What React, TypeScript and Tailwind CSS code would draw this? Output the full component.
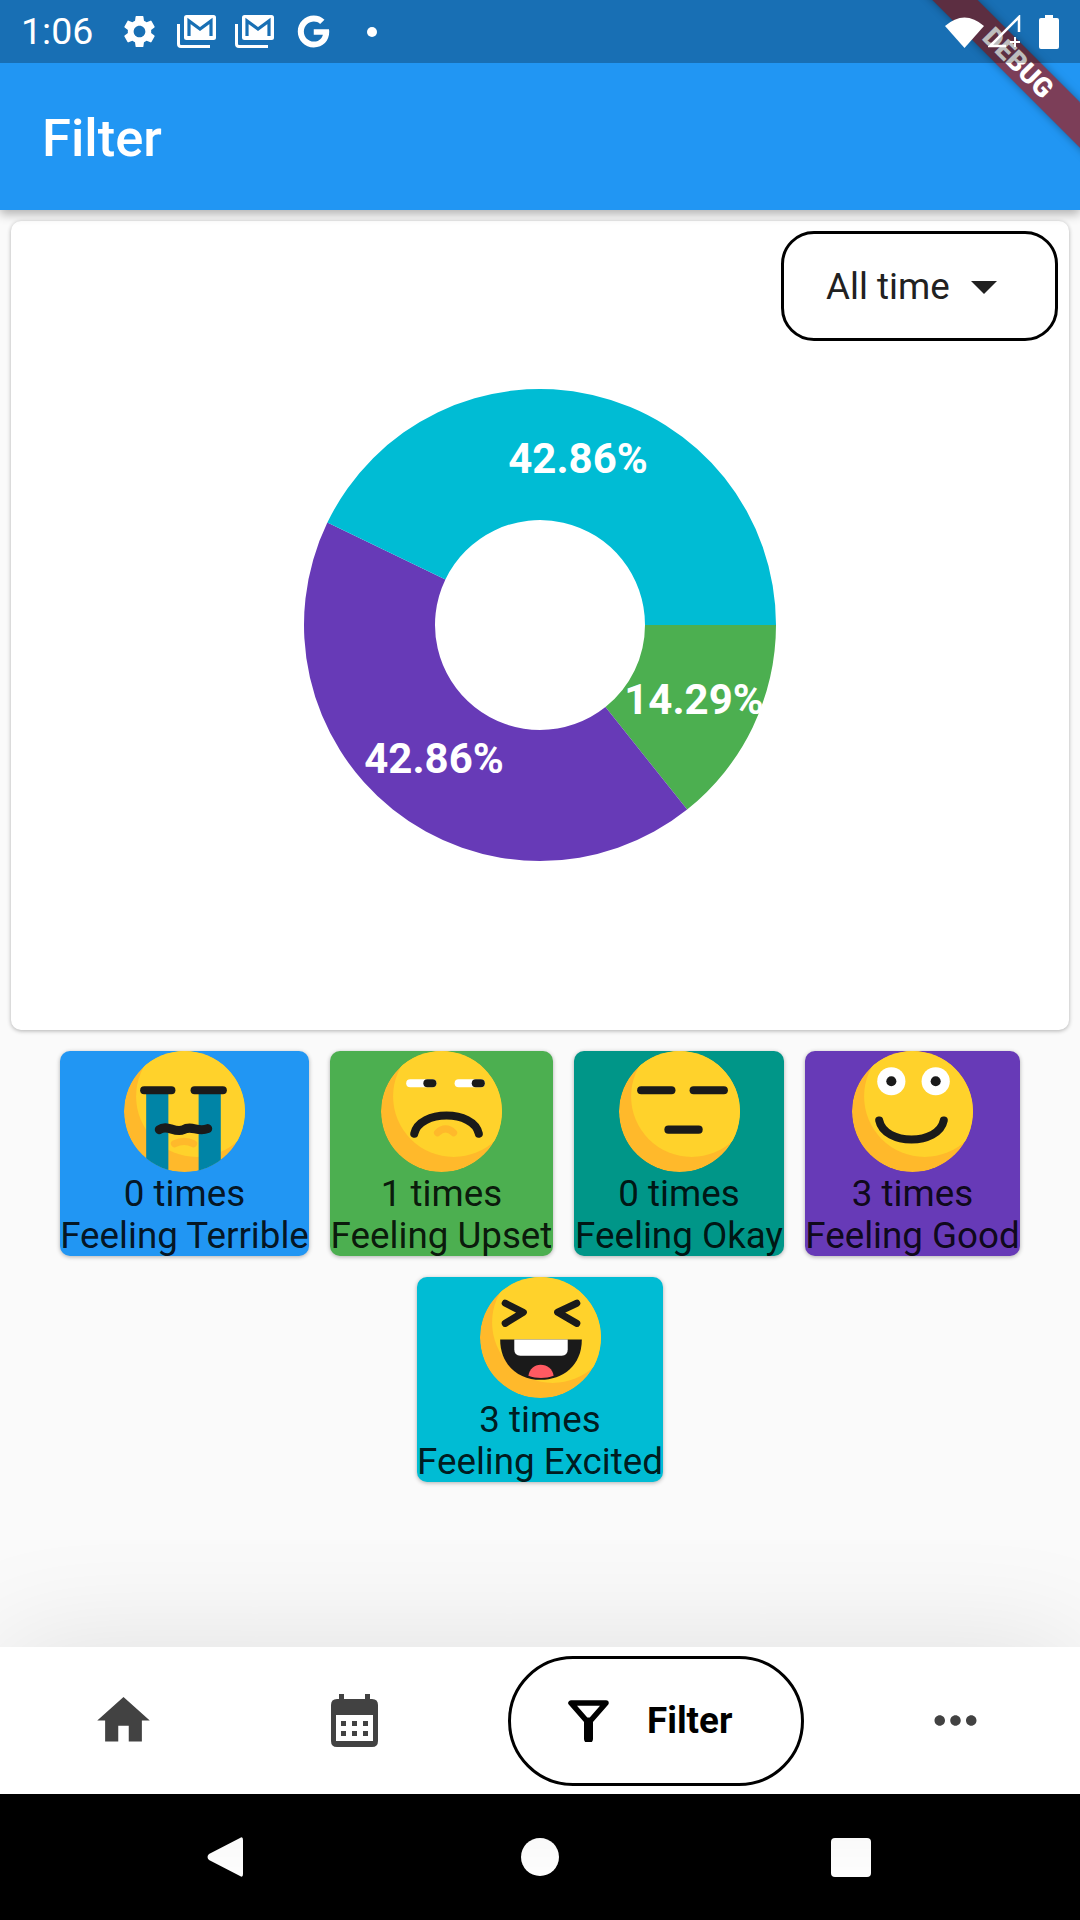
import React from 'react';
import { MdSettings, MdHome, MdMoreHoriz } from 'react-icons/md';
import { FaGoogle } from 'react-icons/fa';

const INK = '#1a1a1a';
const SKIN_DARK = '#ffb92b';
const SKIN = '#ffd22b';

// wedge of the donut, angles in degrees clockwise from east
const wedge = (from: number, to: number) => {
  const c = 236;
  const R = 236;
  const r = 105;
  const pt = (rad: number, deg: number) => {
    const a = (deg * Math.PI) / 180;
    return `${c + rad * Math.cos(a)} ${c + rad * Math.sin(a)}`;
  };
  const large = to - from > 180 ? 1 : 0;
  return `M${pt(R, from)} A${R} ${R} 0 ${large} 1 ${pt(R, to)} L${pt(r, to)} A${r} ${r} 0 ${large} 0 ${pt(r, from)} Z`;
};

const Face: React.FC<{ id: string; children: React.ReactNode }> = ({ id, children }) => (
  <svg viewBox="0 0 120 120" className="w-[121px] h-[121px] block shrink-0">
    <defs>
      <clipPath id={id}>
        <circle cx="60" cy="60" r="60" />
      </clipPath>
    </defs>
    <g clipPath={`url(#${id})`}>
      <circle cx="60" cy="60" r="60" fill={SKIN_DARK} />
      <circle cx="72" cy="45" r="60" fill={SKIN} />
      {children}
    </g>
  </svg>
);

const Line: React.FC<{ x1: number; x2: number; y: number; color?: string }> = ({ x1, x2, y, color = INK }) => (
  <line x1={x1 + 4} x2={x2 - 4} y1={y} y2={y} stroke={color} strokeWidth="8" strokeLinecap="round" />
);

const TILES = [
  {
    label: 'Feeling Terrible',
    count: 0,
    cls: 'w-[249px] bg-[#2196f3]',
    face: (
      <Face id="terrible">
        <path d="M22 39H44V120H22ZM74 39H96V120H74Z" fill="#0084a6" />
        <Line x1={16} x2={51} y={39} />
        <Line x1={66} x2={102} y={39} />
        <path d="M35 78C43 72 50 82 59 78C67 73 73 81 83 77" fill="none" stroke={INK} strokeWidth="9" strokeLinecap="round" />
        <path d="M50 92C56 89 63 89 69 92" fill="none" stroke={SKIN_DARK} strokeWidth="7" strokeLinecap="round" />
      </Face>
    ),
  },
  {
    label: 'Feeling Upset',
    count: 1,
    cls: 'w-[223px] bg-[#4caf50]',
    face: (
      <Face id="upset">
        <Line x1={25} x2={55} y={32} color="#ffffff" />
        <Line x1={42} x2={55} y={32} />
        <Line x1={73} x2={103} y={32} color="#ffffff" />
        <Line x1={90} x2={103} y={32} />
        <path d="M33 82C38 58 92 58 97 82" fill="none" stroke={INK} strokeWidth="8" strokeLinecap="round" />
        <path d="M56 81C61 76 67 76 72 81" fill="none" stroke={SKIN_DARK} strokeWidth="7" strokeLinecap="round" />
      </Face>
    ),
  },
  {
    label: 'Feeling Okay',
    count: 0,
    cls: 'w-[210px] bg-[#009688]',
    face: (
      <Face id="okay">
        <Line x1={18} x2={56} y={39} />
        <Line x1={70} x2={108} y={39} />
        <Line x1={45} x2={83} y={78} />
      </Face>
    ),
  },
  {
    label: 'Feeling Good',
    count: 3,
    cls: 'w-[215px] bg-[#673ab7]',
    face: (
      <Face id="good">
        <circle cx="39" cy="30" r="14" fill="#ffffff" />
        <circle cx="83" cy="30" r="14" fill="#ffffff" />
        <circle cx="39" cy="30" r="5" fill={INK} />
        <circle cx="83" cy="30" r="5" fill={INK} />
        <path d="M27 69C32 94 86 94 91 69" fill="none" stroke={INK} strokeWidth="8" strokeLinecap="round" />
      </Face>
    ),
  },
  {
    label: 'Feeling Excited',
    count: 3,
    cls: 'w-[246px] bg-[#00bcd4]',
    face: (
      <Face id="excited">
        <path d="M25 26L43 35L25 46M96 26L77 35L96 46" fill="none" stroke={INK} strokeWidth="7" strokeLinecap="round" strokeLinejoin="round" />
        <path d="M20 62H101C101 88 82 102 60 102C39 102 20 88 20 62Z" fill={INK} />
        <path d="M34 62H87V72Q87 78 81 78H40Q34 78 34 72Z" fill="#ffffff" />
        <path d="M48 98C49 91 54 87 60 87C67 87 72 91 73 98C65 101 56 101 48 98Z" fill="#ff5a62" />
      </Face>
    ),
  },
];

const GmailIcon = () => (
  <svg viewBox="0 0 39 33" className="w-[39px] h-[33px]">
    <path d="M1.5 9V29Q1.5 31.5 4 31.5H33" fill="none" stroke="#ffffff" strokeWidth="3" />
    <rect x="7" y="0" width="32" height="25" rx="2.5" fill="#ffffff" />
    <path d="M12 21V6L23 14L34 6V21" fill="none" stroke="#186fb4" strokeWidth="3.2" />
  </svg>
);

const StatusBar = () => (
  <div className="relative z-20 h-[63px] bg-[#00000042] flex items-center pl-[21px] text-white">
    <span className="text-[37.5px] leading-none font-normal w-[100px]">1:06</span>
    <MdSettings size={39} className="text-white -ml-[1px]" />
    <div className="ml-[18px]"><GmailIcon /></div>
    <div className="ml-[19px]"><GmailIcon /></div>
    <FaGoogle size={33} className="ml-[23px] text-white" />
    <div className="ml-[37px] w-[10px] h-[10px] rounded-full bg-white" />
    <div className="ml-auto flex items-center pr-[21px]">
      <svg viewBox="0 0 39 32" className="w-[39px] h-[32px]">
        <path d="M0 10Q19.5 -7 39 10L19.5 32Z" fill="#ffffff" />
      </svg>
      <svg viewBox="0 0 33 33" className="w-[33px] h-[33px] ml-[4px]">
        <path d="M31 17V2L2 31H18" fill="none" stroke="#ffffff" strokeWidth="2.5" />
        <path d="M22 27H32M27 22V32" fill="none" stroke="#ffffff" strokeWidth="2" />
      </svg>
      <svg viewBox="0 0 20 34" className="w-[20px] h-[34px] ml-[18px]">
        <path d="M6 0H14V3H18Q20 3 20 5V32Q20 34 18 34H2Q0 34 0 32V5Q0 3 2 3H6Z" fill="#ffffff" />
      </svg>
    </div>
  </div>
);

const Header = () => (
  <header className="relative z-10 h-[210px] shrink-0 bg-[#2196f3] shadow-[0_4px_10px_rgba(0,0,0,0.3)]">
    <StatusBar />
    <h1 className="pl-[42px] pt-[3px] h-[147px] flex items-center text-[52.5px] font-medium text-white">Filter</h1>
    {/* debug ribbon */}
    <div className="absolute left-[868px] top-[47px] w-[300px] h-[32px] rotate-45 z-10 bg-[rgba(160,28,28,0.72)] shadow-[0_0_8px_rgba(0,0,0,0.35)] flex items-center justify-center text-white text-[27px] leading-none font-black">
      DEBUG
    </div>
  </header>
);

const DonutChart = () => (
  <svg viewBox="0 0 472 472" className="w-[472px] h-[472px] overflow-visible mx-auto mt-[48px]">
    <path d={wedge(0, 51.43)} fill="#4caf50" />
    <path d={wedge(51.43, 205.71)} fill="#673ab7" />
    <path d={wedge(205.71, 360)} fill="#00bcd4" />
    <g fill="#ffffff" fontFamily="Roboto, sans-serif" fontSize="42" fontWeight="700" textAnchor="middle">
      <text x="274" y="84">42.86%</text>
      <text x="390" y="325">14.29%</text>
      <text x="130" y="384">42.86%</text>
    </g>
  </svg>
);

const BottomNav = () => (
  <nav className="relative h-[147px] shrink-0 bg-white shadow-[0_0_120px_rgba(0,0,0,0.11)] flex items-center pl-[31px] text-[#424242]">
    <div className="w-[184px] flex justify-center"><MdHome size={63} /></div>
    <div className="w-[183px] ml-[48px] flex justify-center">
      <svg viewBox="0 0 47 53" className="w-[47px] h-[53px]">
        <path
          fillRule="evenodd"
          d="M8 0H13V5H34V0H39V5H41Q47 5 47 11V47Q47 53 41 53H6Q0 53 0 47V11Q0 5 6 5H8ZM5 21V47H42V21Z"
          fill="#424242"
        />
        <path d="M10 27H15V32H10ZM21 27H26V32H21ZM32 27H37V32H32ZM10 37H15V42H10ZM21 37H26V42H21ZM32 37H37V42H32Z" fill="#424242" />
      </svg>
    </div>
    <div className="ml-[62px] w-[296px] h-[130px] rounded-full border-[3px] border-black flex items-center pl-[57px] text-black">
      <svg viewBox="0 0 41 42" className="w-[41px] h-[42px]">
        <path d="M3 3H38L20.5 23Z" fill="none" stroke="#000000" strokeWidth="5.5" strokeLinejoin="round" />
        <path d="M20.5 22V39" stroke="#000000" strokeWidth="9" strokeLinecap="round" />
      </svg>
      <span className="ml-[38px] pt-[2px] text-[36.75px] leading-none font-bold">Filter</span>
    </div>
    <div className="ml-[60px] w-[183px] flex justify-center"><MdMoreHoriz size={63} /></div>
  </nav>
);

const SystemNav = () => (
  <div className="h-[126px] shrink-0 bg-black flex items-center pl-[207px]">
    <svg viewBox="0 0 36 42" className="w-[36px] h-[42px]">
      <path d="M33 2Q36 0 36 4V38Q36 42 33 40L2 24Q-1 21 2 18Z" fill="#ffffff" />
    </svg>
    <div className="ml-[278px] w-[38px] h-[38px] rounded-full bg-white" />
    <div className="ml-[272px] w-[40px] h-[39px] rounded-[4px] bg-white" />
  </div>
);

export default function App() {
  return (
    <div className="relative w-[1080px] h-[1920px] overflow-hidden flex flex-col bg-[#fafafa] font-['Roboto',sans-serif]">
      <Header />
      <main className="flex-1 px-[11px] pt-[11px]">
        <section className="h-[809px] rounded-[10px] bg-white shadow-[0_1px_4px_rgba(0,0,0,0.3)] pt-[10px]">
          <div className="flex justify-end pr-[11px]">
            <div className="w-[277px] h-[110px] rounded-[33px] border-[3px] border-black flex items-center pl-[42px] pt-[3px] text-[36.75px] text-[#212121]">
              <span className="leading-none">All time</span>
              <div className="ml-[21px] w-0 h-0 border-l-[13px] border-r-[13px] border-t-[13px] border-l-transparent border-r-transparent border-t-[#212121]" />
            </div>
          </div>
          <DonutChart />
        </section>
        <div className="mt-[21px] flex flex-wrap justify-center gap-[21px]">
          {TILES.map(tile => (
            <div
              key={tile.label}
              className={`${tile.cls} h-[205px] rounded-[10px] overflow-hidden shadow-[0_1px_4px_rgba(0,0,0,0.3)] flex flex-col items-center text-[36.75px] leading-[42px] text-[#000000de]`}
            >
              {tile.face}
              <p className="pt-[1px]">{tile.count} times</p>
              <p className="whitespace-nowrap">{tile.label}</p>
            </div>
          ))}
        </div>
      </main>
      <BottomNav />
      <SystemNav />
    </div>
  );
}
